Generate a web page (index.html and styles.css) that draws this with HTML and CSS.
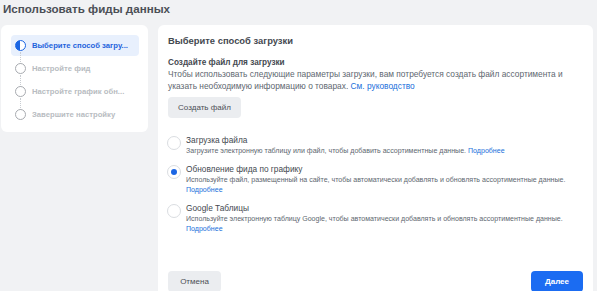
FILE: index.html
```html
<!DOCTYPE html>
<html lang="ru">
<head>
  <meta charset="UTF-8">
  <meta name="viewport" content="width=device-width, initial-scale=1.0">
  <title>Использовать фиды данных</title>
  <link rel="stylesheet" href="styles.css">
</head>
<body>
  <div class="page">
    <h1 class="page-title">Использовать фиды данных</h1>

    <div class="layout">
      <!-- шаги мастера -->
      <div class="card steps">
        <div class="step active">
          <span class="step-icon"></span>
          <span class="step-label">Выберите способ загру...</span>
        </div>
        <div class="step">
          <span class="step-icon"></span>
          <span class="step-label">Настройте фид</span>
        </div>
        <div class="step">
          <span class="step-icon"></span>
          <span class="step-label">Настройте график обн...</span>
        </div>
        <div class="step last">
          <span class="step-icon"></span>
          <span class="step-label">Завершите настройку</span>
        </div>
      </div>

      <!-- основная панель -->
      <div class="card main">
        <h2 class="main-title">Выберите способ загрузки</h2>

        <div class="create-file">
          <div class="sub-title">Создайте файл для загрузки</div>
          <p class="body-text">Чтобы использовать следующие параметры загрузки, вам потребуется создать файл ассортимента и указать необходимую информацию о товарах. <a href="#" class="link">См. руководство</a></p>
          <button class="btn btn-gray">Создать файл</button>
        </div>

        <div class="options">
          <label class="option">
            <span class="radio"></span>
            <span class="option-text">
              <span class="option-title">Загрузка файла</span>
              <span class="option-desc">Загрузите электронную таблицу или файл, чтобы добавить ассортиментные данные. <a href="#" class="link">Подробнее</a></span>
            </span>
          </label>
          <label class="option">
            <span class="radio checked"></span>
            <span class="option-text">
              <span class="option-title">Обновление фида по графику</span>
              <span class="option-desc">Используйте файл, размещенный на сайте, чтобы автоматически добавлять и обновлять ассортиментные данные.<br><a href="#" class="link">Подробнее</a></span>
            </span>
          </label>
          <label class="option">
            <span class="radio"></span>
            <span class="option-text">
              <span class="option-title">Google Таблицы</span>
              <span class="option-desc">Используйте электронную таблицу Google, чтобы автоматически добавлять и обновлять ассортиментные данные.<br><a href="#" class="link">Подробнее</a></span>
            </span>
          </label>
        </div>

        <div class="footer">
          <button class="btn btn-gray btn-cancel">Отмена</button>
          <button class="btn btn-blue">Далее</button>
        </div>
      </div>
    </div>
  </div>
</body>
</html>
```

FILE: styles.css
```css
body {
  font-family: "Liberation Sans", Arial, sans-serif;
  margin: 0;
  padding: 0;
  background-color: #f1f2f4;
  color: #444950;
  overflow: hidden;
}

.page {
  padding: 0 4px 0 1px;
}

.page-title {
  margin: 0;
  padding-left: 2px;
  font-size: 11.6px;
  line-height: 17px;
  font-weight: bold;
  color: #4b4f56;
}

.layout {
  display: flex;
  align-items: flex-start;
  gap: 10px;
  margin-top: 8px;
}

.card {
  background-color: #fff;
  border-radius: 6px;
}

/* шаги */
.steps {
  width: 147px;
  box-sizing: border-box;
  padding: 10px 9px 7px 10px;
  display: flex;
  flex-direction: column;
  gap: 2px;
}

.step {
  display: flex;
  align-items: center;
  height: 21px;
  padding-left: 4px;
  border-radius: 4px;
  font-size: 7.7px;
  font-weight: bold;
  color: #b8bcc1;
  white-space: nowrap;
}

.step-icon {
  position: relative;
  width: 11px;
  height: 11px;
  box-sizing: border-box;
  border: 1.5px solid #a8abb0;
  border-radius: 50%;
  margin-right: 6px;
  flex-shrink: 0;
}

.step-icon::after {
  content: "";
  position: absolute;
  left: 3.5px;
  top: 10.5px;
  height: 12px;
  border-left: 1px dotted #c8ccd1;
}

.step.last .step-icon::after {
  display: none;
}

.step.active {
  background-color: #e8f0fd;
  color: #1e63dc;
}

.step.active .step-icon {
  border-color: #1b66e4;
  background: linear-gradient(to right, #1b66e4 50%, #fff 50%);
}

/* основная панель */
.main {
  flex: 1;
  padding: 9px 10px 12px 10px;
  height: 258px;
  display: flex;
  flex-direction: column;
}

.main-title {
  margin: 0;
  font-size: 9.4px;
  line-height: 14px;
  font-weight: bold;
  color: #444950;
}

.create-file {
  margin-top: 9px;
}

.sub-title {
  font-size: 8.2px;
  line-height: 11px;
  font-weight: bold;
  color: #444950;
}

.body-text {
  margin: 0;
  font-size: 8.35px;
  line-height: 12px;
  color: #606770;
}

.link {
  color: #216fdb;
  text-decoration: none;
}

.btn {
  font-family: inherit;
  border: none;
  border-radius: 4px;
  height: 21px;
  font-size: 8px;
  padding: 0;
  cursor: pointer;
}

.btn-gray {
  background-color: #ebedf0;
  color: #4b4f56;
}

.create-file .btn {
  margin-top: 5px;
  width: 73px;
}

.options {
  margin-top: 16px;
  display: flex;
  flex-direction: column;
  gap: 7px;
}

.option {
  display: flex;
  align-items: flex-start;
  cursor: pointer;
}

.radio {
  width: 14px;
  height: 14px;
  box-sizing: border-box;
  border: 1px solid #dadde1;
  border-radius: 50%;
  margin: 2px 5px 0 -1px;
  flex-shrink: 0;
  display: flex;
  align-items: center;
  justify-content: center;
  background-color: #fff;
}

.radio.checked::after {
  content: "";
  width: 6px;
  height: 6px;
  border-radius: 50%;
  background-color: #1b66e4;
}

.option-text {
  display: flex;
  flex-direction: column;
}

.option-title {
  font-size: 8.3px;
  line-height: 12px;
  color: #444950;
}

.option-desc {
  font-size: 7.05px;
  line-height: 10px;
  color: #606770;
}

.footer {
  margin-top: auto;
  display: flex;
  justify-content: space-between;
}

.btn-cancel {
  width: 53px;
}

.btn-blue {
  width: 52px;
  background-color: #1b6cf2;
  color: #fff;
  font-weight: bold;
}
```
